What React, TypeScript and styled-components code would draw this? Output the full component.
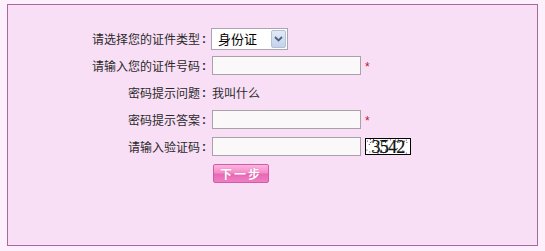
import React from "react";
import styled, { createGlobalStyle } from "styled-components";

const Global = createGlobalStyle`
  html, body { margin: 0; padding: 0; background: #fdeffb; }
  body { font-family: "Noto Sans CJK SC", "Noto Sans", sans-serif; }
`;

const Page = styled.div`
  padding: 4px 7px 0 7px;
  width: 545px;
  height: 251px;
  box-sizing: border-box;
`;

const Panel = styled.div`
  width: 531px;
  height: 242px;
  box-sizing: border-box;
  border: 1px solid #a8699f;
  background: #f9dff6;
  padding-top: 20px;
`;

const Form = styled.div`
  display: grid;
  grid-template-columns: 200px auto;
  grid-auto-rows: 27px;
  column-gap: 4px;
  align-items: center;
`;

const Label = styled.div`
  display: flex;
  justify-content: flex-end;
  align-items: center;
  font-size: 12px;
  color: #2a2a2a;
  line-height: 14px;
  white-space: nowrap;
`;

const Colon = styled.span`
  display: inline-block;
  width: 8px;
  text-align: center;
  font-family: "Liberation Sans", sans-serif;
  font-weight: bold;
  font-size: 12px;
  color: #2a2a2a;
`;

const Field = styled.div`
  display: flex;
  align-items: center;
  gap: 4px;
`;

const Value = styled.span`
  font-size: 12px;
  color: #2a2a2a;
  line-height: 14px;
`;

const Input = styled.input`
  width: 149px;
  height: 19px;
  box-sizing: border-box;
  border: 1px solid #a9a1a8;
  background: #fbf8fa;
  padding: 0 3px;
  margin: 0;
  outline: none;
`;

const Star = styled.span`
  color: #c8102e;
  font-size: 12px;
  font-family: "Liberation Sans", sans-serif;
  line-height: 1;
  padding-top: 2px;
`;

const SelectBox = styled.div`
  width: 77px;
  height: 22px;
  box-sizing: border-box;
  border: 1px solid #a6a6b4;
  background: #ffffff;
  display: flex;
  align-items: center;
  justify-content: space-between;
  padding: 1px;
  margin-left: -1px;
`;

const SelectText = styled.span`
  font-size: 13px;
  color: #000;
  padding-left: 5px;
  line-height: 16px;
`;

const ArrowBtn = styled.div`
  width: 15px;
  height: 18px;
  box-sizing: border-box;
  border: 1px solid #b3c2da;
  background: linear-gradient(#e2eaf6, #c4d2e8);
  border-radius: 2px;
  display: flex;
  align-items: center;
  justify-content: center;
`;

const Captcha = styled.svg`
  display: block;
`;

const NextButton = styled.button`
  width: 56px;
  height: 19px;
  margin: 0 0 0 1px;
  padding: 0;
  box-sizing: border-box;
  border: 1px solid #d45aa4;
  border-radius: 2px;
  background: linear-gradient(#fbb6e0 0%, #f48ccb 45%, #e968b6 55%, #ee7fc2 100%);
  color: #fff;
  font-family: "Noto Sans CJK SC", sans-serif;
  font-size: 12px;
  font-weight: bold;
  letter-spacing: 2px;
  line-height: 16px;
  text-shadow: 0 0 1px #d0559c;
`;

const dots: Array<[number, number]> = [];
let seed = 7;
const rnd = () => {
  seed = (seed * 9301 + 49297) % 233280;
  return seed / 233280;
};
for (let i = 0; i < 40; i++) {
  const edge = rnd();
  const x = 1 + rnd() * 43;
  const y = edge < 0.5 ? 1 + rnd() * 3 : 12 + rnd() * 3;
  dots.push([x, y]);
}
for (let i = 0; i < 14; i++) {
  dots.push([1 + rnd() * 43, 1 + rnd() * 14]);
}

const CaptchaImage = () => (
  <Captcha width={46} height={17} viewBox="0 0 46 17">
    <rect x={0.5} y={0.5} width={45} height={16} fill="#fff" stroke="#000" />
    {dots.map(([x, y], i) => (
      <rect key={i} x={x} y={y} width={1} height={1} fill="#444" />
    ))}
    <text
      x={23}
      y={14.5}
      textAnchor="middle"
      fontFamily="'Liberation Serif', serif"
      fontSize={18}
      fill="#111"
      letterSpacing={-0.8}
      stroke="#111"
      strokeWidth={0.2}
    >
      3542
    </text>
  </Captcha>
);

const Lbl = ({ text }: { text: string }) => (
  <Label>
    {text}
    <Colon>:</Colon>
  </Label>
);

export default function App() {
  return (
    <Page>
      <Global />
      <Panel>
        <Form>
          <Lbl text="请选择您的证件类型" />
          <Field>
            <SelectBox>
              <SelectText>身份证</SelectText>
              <ArrowBtn>
                <svg width="9" height="6" viewBox="0 0 9 6">
                  <path d="M1 1 L4.5 4.5 L8 1" fill="none" stroke="#4d6185" strokeWidth="1.8" />
                </svg>
              </ArrowBtn>
            </SelectBox>
          </Field>

          <Lbl text="请输入您的证件号码" />
          <Field>
            <Input />
            <Star>*</Star>
          </Field>

          <Lbl text="密码提示问题" />
          <Field>
            <Value>我叫什么</Value>
          </Field>

          <Lbl text="密码提示答案" />
          <Field>
            <Input />
            <Star>*</Star>
          </Field>

          <Lbl text="请输入验证码" />
          <Field>
            <Input />
            <CaptchaImage />
          </Field>

          <span />
          <Field>
            <NextButton>下一步</NextButton>
          </Field>
        </Form>
      </Panel>
    </Page>
  );
}
